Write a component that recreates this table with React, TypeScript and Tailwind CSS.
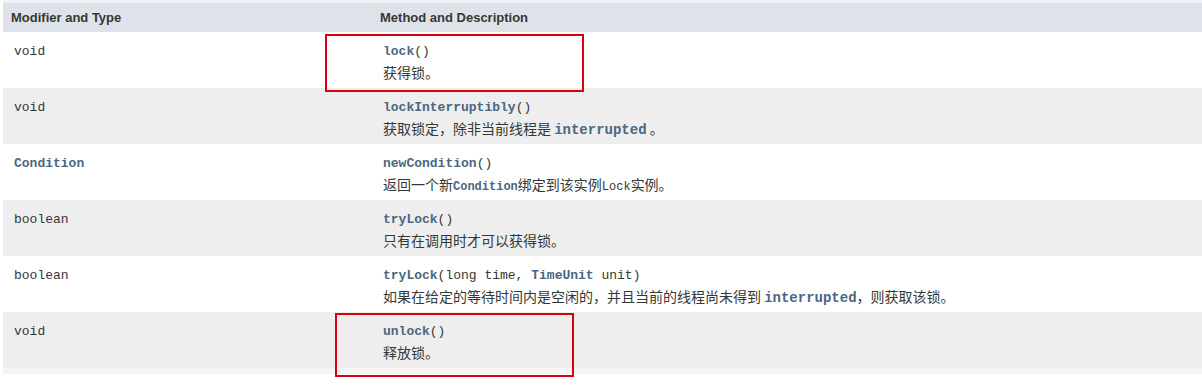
const mono = "font-['Liberation_Mono','DejaVu_Sans_Mono',monospace]";
const cjk = "font-['Noto_Sans_CJK_SC','Noto_Sans',sans-serif]";

type Row = {
  type: React.ReactNode;
  method: React.ReactNode;
  desc: React.ReactNode;
};

const Link = ({ children }: { children: React.ReactNode }) => (
  <span className={`${mono} font-bold text-[#4a6782]`}>{children}</span>
);

const rows: Row[] = [
  {
    type: "void",
    method: (
      <>
        <Link>lock</Link>()
      </>
    ),
    desc: "获得锁。",
  },
  {
    type: "void",
    method: (
      <>
        <Link>lockInterruptibly</Link>()
      </>
    ),
    desc: (
      <>
        获取锁定，除非当前线程是 <Link>interrupted</Link> 。
      </>
    ),
  },
  {
    type: <Link>Condition</Link>,
    method: (
      <>
        <Link>newCondition</Link>()
      </>
    ),
    desc: (
      <>
        返回一个新<span className={`${mono} font-bold text-[#4a6782] text-[12px]`}>Condition</span>绑定到该实例
        <span className={`${mono} text-[12px]`}>Lock</span>实例。
      </>
    ),
  },
  {
    type: "boolean",
    method: (
      <>
        <Link>tryLock</Link>()
      </>
    ),
    desc: "只有在调用时才可以获得锁。",
  },
  {
    type: "boolean",
    method: (
      <>
        <Link>tryLock</Link>(long time, <Link>TimeUnit</Link> unit)
      </>
    ),
    desc: (
      <>
        如果在给定的等待时间内是空闲的，并且当前的线程尚未得到 <Link>interrupted</Link>，则获取该锁。
      </>
    ),
  },
  {
    type: "void",
    method: (
      <>
        <Link>unlock</Link>()
      </>
    ),
    desc: "释放锁。",
  },
];

export default function App() {
  return (
    <div className="relative w-[1202px] h-[385px] bg-white overflow-hidden pl-[3px] text-[#353833]">
      <div className="h-[3px] bg-[#eef2f9]" />
      <div className="flex h-[29px] items-center bg-[#dee3e9] font-['Liberation_Sans',Arial,sans-serif] text-[13px] font-bold">
        <div className="w-[369px] pl-[8px]">Modifier and Type</div>
        <div className="flex-1 pl-[8px]">Method and Description</div>
      </div>
      {rows.map((r, i) => (
        <div
          key={i}
          className={`flex h-[56px] pt-[10px] ${i % 2 === 0 ? "bg-white" : "bg-[#eeeeee]"}`}
        >
          <div className={`w-[369px] pl-[11px] ${mono} text-[13px] leading-[20px]`}>{r.type}</div>
          <div className="flex-1 pl-[11px]">
            <div className={`${mono} text-[13px] leading-[20px]`}>{r.method}</div>
            <div className={`${cjk} text-[14px] leading-[20px]`}>{r.desc}</div>
          </div>
        </div>
      ))}
      <div className="h-[6px] bg-[#f5f5f5]" />

      <div className="absolute left-[325px] top-[34px] w-[259px] h-[58px] border-2 border-[#d7000f]" />
      <div className="absolute left-[335px] top-[313px] w-[239px] h-[64px] border-2 border-[#d7000f]" />
    </div>
  );
}
